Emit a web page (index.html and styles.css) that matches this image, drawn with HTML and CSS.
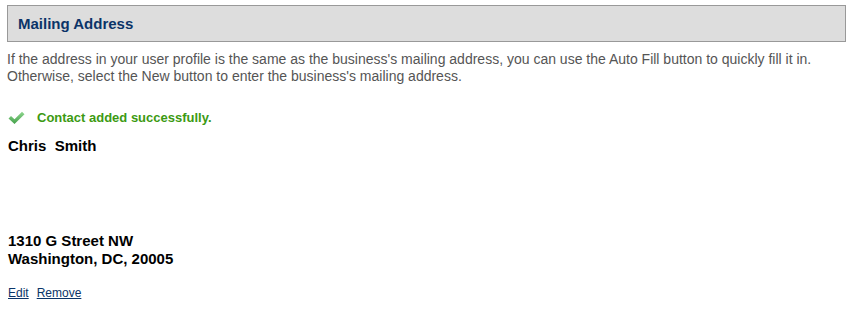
FILE: index.html
```html
<!DOCTYPE html>
<html>
<head>
<meta charset="utf-8">
<link rel="stylesheet" href="styles.css">
</head>
<body>
<div class="page">
  <div class="section-head"><h2 class="section-title">Mailing Address</h2></div>
  <p class="intro">If the address in your user profile is the same as the business's mailing address, you can use the Auto Fill button to quickly fill it in. Otherwise, select the New button to enter the business's mailing address.</p>
  <div class="success">
    <svg class="check" width="17" height="14" viewBox="0 0 17 14">
      <defs>
        <linearGradient id="g" x1="0" y1="0" x2="0" y2="1">
          <stop offset="0" stop-color="#8fd68f"/>
          <stop offset="1" stop-color="#44a14a"/>
        </linearGradient>
      </defs>
      <path d="M0.5 7.5 L3 5 L6.5 8.2 L14 0.8 L16.5 3.3 L6.5 13 Z" fill="url(#g)"/>
    </svg>
    <span class="success-text">Contact added successfully.</span>
  </div>
  <div class="name">Chris&nbsp; Smith</div>
  <div class="address">
    <div>1310 G Street NW</div>
    <div>Washington, DC, 20005</div>
  </div>
  <div class="actions"><a href="#" class="link">Edit</a><a href="#" class="link">Remove</a></div>
</div>
</body>
</html>
```
FILE: styles.css
```css
html, body { margin: 0; padding: 0; background: #fff; }
body { font-family: "Liberation Sans", Arial, sans-serif; }
.page { padding: 5px 5px 0 7px; }
.section-head {
  border: 1px solid #999;
  background: #dddddd;
  height: 35px;
  display: flex;
  align-items: center;
  padding-left: 10px;
}
.section-title {
  margin: 0;
  font-size: 15px;
  font-weight: bold;
  color: #0b3468;
}
.intro {
  margin: 9px 0 0 0;
  font-size: 14px;
  line-height: 17px;
  color: #555;
}
.success {
  display: flex;
  align-items: center;
  margin-top: 25px;
  padding-left: 1px;
}
.check { display: block; }
.success-text {
  margin-left: 12px;
  font-size: 13px;
  font-weight: bold;
  color: #3c9a12;
}
.name {
  margin-top: 12px;
  font-size: 15px;
  font-weight: bold;
  color: #000;
  padding-left: 1px;
}
.address {
  margin-top: 78px;
  font-size: 15px;
  line-height: 18px;
  font-weight: bold;
  color: #000;
  padding-left: 1px;
}
.actions {
  margin-top: 18px;
  display: flex;
  gap: 8px;
  padding-left: 1px;
}
.link {
  font-size: 12px;
  color: #0b3468;
  text-decoration: underline;
}
```
